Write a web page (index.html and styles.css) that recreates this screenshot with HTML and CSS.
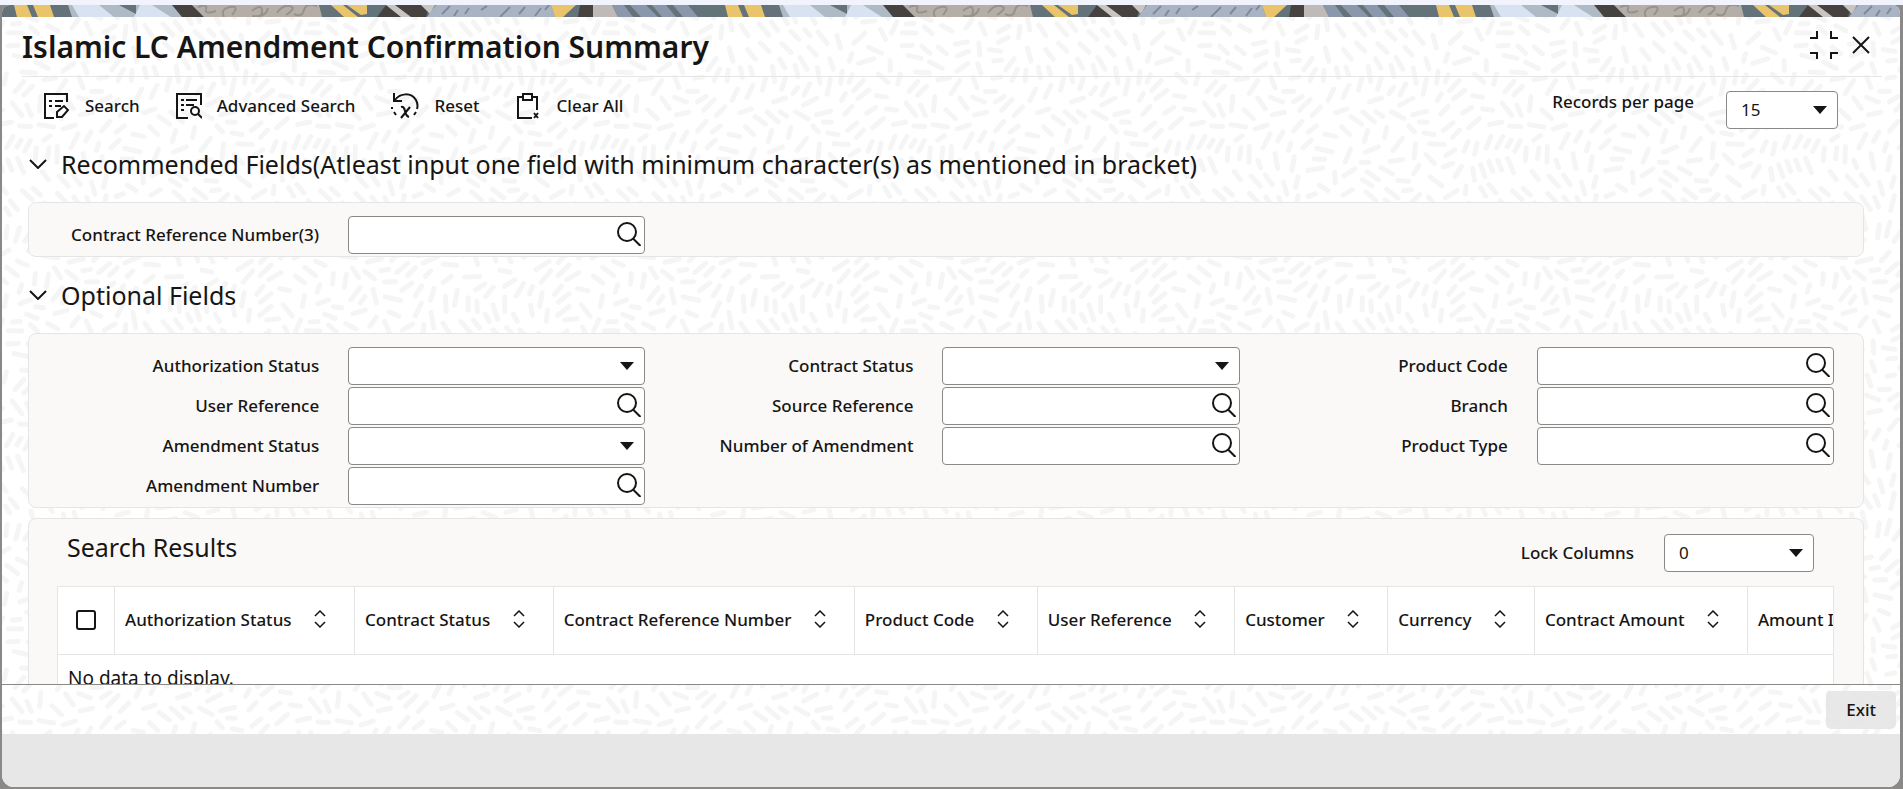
FILE: index.html
```
<!DOCTYPE html>
<html lang="en">
<head>
    <meta charset="UTF-8">
    <meta name="viewport" content="width=device-width, initial-scale=1.0">
    <title>Islamic LC Amendment Confirmation Summary</title>
    <link rel="stylesheet" href="styles.css">
</head>
<body>
    <svg class="sprite" aria-hidden="true">
        <symbol id="icon-lens" viewBox="0 0 24 24">
            <circle cx="10" cy="10" r="9" />
            <path d="M16 16.5L23.5 24" />
        </symbol>
        <symbol id="icon-chevron" viewBox="0 0 18 10">
            <path d="M1 1l8 8 8-8" />
        </symbol>
        <symbol id="icon-sort" viewBox="0 0 12 18">
            <path d="M1 6l5-5 5 5M1 12l5 5 5-5" />
        </symbol>
    </svg>

    <div class="window">
        <svg class="banner" aria-hidden="true">
            <defs>
                <pattern id="strip" width="711" height="12" patternUnits="userSpaceOnUse">
                    <rect width="711" height="12" fill="#64727a" />
                    <path d="M12 0h13l5 12H15zM31 0h17l4 12H36z" fill="#e9c46b" />
                    <path d="M66 0h107l12 12H70z" fill="#aebac6" />
                    <path d="M70 0h27l15 12H77zM138 0h12l19 12H132z" fill="#d8e2f0" />
                    <path d="M117 0h17v9z" fill="#64727a" />
                    <path d="M170 0h20l12 12h-22z" fill="#454240" />
                    <path d="M190 0h127l3 12H202z" fill="#b5aea8" />
                    <path d="M196 2q10-4 8 2t10 2M222 12q-4-8 6-10t2 8M250 6q10-8 10 0t-10 5q14 2 16-8M275 8q6-9 13-7t-4 9M292 9q8 4 10-4t13-4" fill="none" stroke="#98928c" stroke-width="2" />
                    <path d="M329 0h12l15 12h-14zM345 0h20v9l-6 1z" fill="#e9c46b" />
                    <path d="M384 0h44l-4 12h-49z" fill="#454240" />
                    <path d="M384 0h9l16 12h-10zM419 0h14l-5 9z" fill="#c9c6c2" />
                    <path d="M434 0h115l4 12H425z" fill="#a9b3c3" />
                    <path d="M440 9l8-8M452 11l4-6M463 9l4-6M485 1l-6 4M498 12l10-10M517 9l6-7M533 11l6-8M543 5l4-5" stroke="#7f8a99" stroke-width="2" />
                    <path d="M549 0h25l-13 12h-8z" fill="#e9c46b" />
                    <path d="M578 0h14v12h-16z" fill="#454240" />
                    <path d="M591 0h19l6 12h-25z" fill="#bdbab7" />
                    <path d="M610 0h12l9 12h-15zM628 0h16l12 12h-17zM650 0h14l10 12h-14zM671 0h15l10 12h-15z" fill="#8b97aa" />
                </pattern>
            </defs>
            <rect width="100%" height="12" fill="url(#strip)" />
        </svg>

        <header class="titlebar">
            <h1>Islamic LC Amendment Confirmation Summary</h1>
            <div class="window-actions">
                <button type="button" aria-label="Restore">
                    <svg width="28" height="28" viewBox="0 0 28 28"><path d="M0 7h7V0M28 7h-7V0M0 22h7v6M28 22h-7v6" /></svg>
                </button>
                <button type="button" aria-label="Close">
                    <svg width="18" height="18" viewBox="0 0 18 18"><path d="M1 1l16 16M17 1L1 17" /></svg>
                </button>
            </div>
        </header>

        <main class="content">
            <div class="toolbar">
                <button type="button">
                    <svg width="26" height="26" viewBox="0 0 26 26"><path d="M23 9V1H1v24h9" /><path d="M5 8h3M11 8h8M5 13h3M11 13h6" /><path d="M13 24v-5l7-6 4 4-6 7z" /></svg>
                    Search
                </button>
                <button type="button">
                    <svg width="26" height="26" viewBox="0 0 26 26"><path d="M25 12V1H1v24h11" /><path d="M5 7h3M10 7h11M5 12h3M10 12h8M5 17h3" /><circle cx="19" cy="18" r="4" /><path d="M22 21l4 4" /></svg>
                    Advanced Search
                </button>
                <button type="button">
                    <svg width="28" height="26" viewBox="0 0 28 26"><path d="M3 0v8h8" /><path d="M4 7C9 0 20-1 25 7c2 4 2 6 1 9" /><path d="M1 14v2M3 19l2 3M25 19l-2 3" /><path d="M10 14q3-1 4 4t4 6M19 14l-9 11" /></svg>
                    Reset
                </button>
                <button type="button">
                    <svg width="26" height="26" viewBox="0 0 26 26"><path d="M7 4H2v21h14M16 4h5v13" /><path d="M7 1h9v6H7z" /><path d="M18 20l4 5M22 20l-4 5" /></svg>
                    Clear All
                </button>
                <div class="page-size">
                    <label for="records">Records per page</label>
                    <select id="records"><option>15</option></select>
                </div>
            </div>

            <h2 class="section-title">
                <svg width="18" height="10"><use href="#icon-chevron" /></svg>
                Recommended Fields(Atleast input one field with minimum character(s) as mentioned in bracket)
            </h2>
            <section class="panel fields">
                <div class="column">
                    <div class="field">
                        <label for="contract-ref">Contract Reference Number(3)</label>
                        <div class="lookup"><input id="contract-ref" type="text"><button type="button" aria-label="Look up"><svg width="24" height="24"><use href="#icon-lens" /></svg></button></div>
                    </div>
                </div>
            </section>

            <h2 class="section-title">
                <svg width="18" height="10"><use href="#icon-chevron" /></svg>
                Optional Fields
            </h2>
            <section class="panel fields">
                <div class="column">
                    <div class="field">
                        <label for="auth-status">Authorization Status</label>
                        <select id="auth-status"><option></option></select>
                    </div>
                    <div class="field">
                        <label for="user-ref">User Reference</label>
                        <div class="lookup"><input id="user-ref" type="text"><button type="button" aria-label="Look up"><svg width="24" height="24"><use href="#icon-lens" /></svg></button></div>
                    </div>
                    <div class="field">
                        <label for="amend-status">Amendment Status</label>
                        <select id="amend-status"><option></option></select>
                    </div>
                    <div class="field">
                        <label for="amend-number">Amendment Number</label>
                        <div class="lookup"><input id="amend-number" type="text"><button type="button" aria-label="Look up"><svg width="24" height="24"><use href="#icon-lens" /></svg></button></div>
                    </div>
                </div>
                <div class="column">
                    <div class="field">
                        <label for="contract-status">Contract Status</label>
                        <select id="contract-status"><option></option></select>
                    </div>
                    <div class="field">
                        <label for="source-ref">Source Reference</label>
                        <div class="lookup"><input id="source-ref" type="text"><button type="button" aria-label="Look up"><svg width="24" height="24"><use href="#icon-lens" /></svg></button></div>
                    </div>
                    <div class="field">
                        <label for="amend-count">Number of Amendment</label>
                        <div class="lookup"><input id="amend-count" type="text"><button type="button" aria-label="Look up"><svg width="24" height="24"><use href="#icon-lens" /></svg></button></div>
                    </div>
                </div>
                <div class="column">
                    <div class="field">
                        <label for="product-code">Product Code</label>
                        <div class="lookup"><input id="product-code" type="text"><button type="button" aria-label="Look up"><svg width="24" height="24"><use href="#icon-lens" /></svg></button></div>
                    </div>
                    <div class="field">
                        <label for="branch">Branch</label>
                        <div class="lookup"><input id="branch" type="text"><button type="button" aria-label="Look up"><svg width="24" height="24"><use href="#icon-lens" /></svg></button></div>
                    </div>
                    <div class="field">
                        <label for="product-type">Product Type</label>
                        <div class="lookup"><input id="product-type" type="text"><button type="button" aria-label="Look up"><svg width="24" height="24"><use href="#icon-lens" /></svg></button></div>
                    </div>
                </div>
            </section>

            <section class="panel results">
                <div class="results-head">
                    <h2>Search Results</h2>
                    <div class="lock">
                        <label for="lock-columns">Lock Columns</label>
                        <select id="lock-columns"><option>0</option></select>
                    </div>
                </div>
                <div class="table-wrap">
                    <table>
                        <thead>
                            <tr>
                                <th class="tick"><input type="checkbox" aria-label="Select all"></th>
                                <th>Authorization Status <svg width="12" height="18"><use href="#icon-sort" /></svg></th>
                                <th>Contract Status <svg width="12" height="18"><use href="#icon-sort" /></svg></th>
                                <th>Contract Reference Number <svg width="12" height="18"><use href="#icon-sort" /></svg></th>
                                <th>Product Code <svg width="12" height="18"><use href="#icon-sort" /></svg></th>
                                <th>User Reference <svg width="12" height="18"><use href="#icon-sort" /></svg></th>
                                <th>Customer <svg width="12" height="18"><use href="#icon-sort" /></svg></th>
                                <th>Currency <svg width="12" height="18"><use href="#icon-sort" /></svg></th>
                                <th>Contract Amount <svg width="12" height="18"><use href="#icon-sort" /></svg></th>
                                <th>Amount In</th>
                            </tr>
                        </thead>
                        <tbody>
                            <tr><td colspan="10">No data to display.</td></tr>
                        </tbody>
                    </table>
                </div>
            </section>
        </main>

        <footer class="actions">
            <button type="button" class="exit">Exit</button>
        </footer>
        <div class="status"></div>
    </div>
    <script src="script.js"></script>
</body>
</html>
```
FILE: styles.css
```
* {
    margin: 0;
    padding: 0;
    box-sizing: border-box;
}

body {
    display: flex;
    height: 100vh;
    padding: 5px 3px 2px 2px;
    font-family: 'Noto Sans', 'Open Sans', sans-serif;
    font-size: 17px;
    line-height: 24px;
    color: #161513;
    background: linear-gradient(#f1f4fd 5px, #8b8987 5px);
    overflow: hidden;
}

button, input, select {
    font: inherit;
    color: inherit;
}

button {
    border: 0;
    background: none;
}

button, label {
    font-weight: 500;
}

svg {
    flex: none;
    fill: none;
    stroke: #161513;
    stroke-width: 2;
}

.sprite {
    position: absolute;
    width: 0;
    height: 0;
}

.window {
    flex: 1;
    min-width: 0;
    display: flex;
    flex-direction: column;
    border-radius: 8px 8px 12px 12px;
    background-color: #fff;
    background-image: var(--texture);
    overflow: hidden;
}

.banner {
    width: 100%;
    height: 12px;
    stroke: none;
}

.titlebar {
    display: flex;
    align-items: center;
    justify-content: space-between;
    height: 60px;
    margin: 0 18px 0 20px;
    border-bottom: 1px solid #e5e5e5;
}

h1 {
    font-size: 30px;
    line-height: 40px;
    font-weight: 600;
}

.window-actions {
    display: flex;
    align-items: center;
    gap: 14px;
    padding: 0 12px 4px 0;
}

.window-actions button {
    display: flex;
}

.content {
    flex: 1;
    min-height: 0;
    padding: 0 36px 0 26px;
    overflow: hidden;
}

.toolbar {
    display: flex;
    align-items: center;
    gap: 36px;
    height: 58px;
    padding: 0 26px 0 16px;
}

.toolbar button {
    display: flex;
    align-items: center;
    gap: 15px;
}

.page-size {
    display: flex;
    gap: 32px;
    margin-left: auto;
}

.page-size label {
    padding-top: 6px;
}

.page-size select {
    width: 112px;
    margin-top: 7px;
}

select, .lookup {
    height: 38px;
    border: 1px solid #8b8985;
    border-radius: 4px;
    background-color: #fff;
}

select {
    appearance: none;
    padding: 0 14px;
    background-image: url("data:image/svg+xml,%3Csvg xmlns='http://www.w3.org/2000/svg' width='14' height='8'%3E%3Cpath d='M0 0h14L7 8z' fill='%23161513'/%3E%3C/svg%3E");
    background-repeat: no-repeat;
    background-position: right 10px center;
}

.lookup {
    display: flex;
}

.lookup input {
    flex: 1;
    min-width: 0;
    padding: 0 12px;
    border: 0;
    background: none;
}

.lookup button {
    display: flex;
    padding: 5px 3px;
}

h2 {
    font-size: 25px;
    line-height: 34px;
    font-weight: 400;
}

.section-title {
    display: flex;
    align-items: center;
    gap: 14px;
    height: 67px;
    padding: 0 0 9px 1px;
}

.panel {
    border: 1px solid #e5e5e5;
    border-radius: 8px;
    background: #fbf9f8;
}

.fields {
    display: grid;
    grid-template-columns: repeat(3, minmax(0, 1fr));
    padding: 13px 29px 2px 22px;
}

.column {
    display: flex;
    flex-direction: column;
    gap: 2px;
}

.field {
    display: flex;
}

.field label {
    width: 50%;
    padding: 7px 29px 0 0;
    text-align: right;
}

.field select, .field .lookup {
    width: 50%;
}

.fields + .section-title {
    padding-top: 8px;
    height: 76px;
}

.results {
    margin-top: 10px;
    padding: 11px 29px 30px 28px;
}

.results-head {
    display: flex;
    justify-content: space-between;
    height: 56px;
    padding: 0 20px 0 10px;
}

.lock {
    display: flex;
    gap: 30px;
    padding-top: 4px;
}

.lock label {
    padding-top: 7px;
}

.lock select {
    width: 150px;
}

.table-wrap {
    border: 1px solid #e5e5e5;
    background: #fff;
    overflow: hidden;
}

table {
    border-collapse: collapse;
    white-space: nowrap;
}

th {
    height: 67px;
    padding: 0 28px 0 10px;
    border-right: 1px solid #e5e5e5;
    border-bottom: 1px solid #e5e5e5;
    font-weight: 500;
    text-align: left;
}

th svg {
    margin-left: 18px;
    vertical-align: -2px;
    stroke-width: 1.5;
}

.tick {
    padding: 0 18px;
}

.tick input {
    display: block;
    appearance: none;
    width: 20px;
    height: 20px;
    border: 2px solid #161513;
    border-radius: 3px;
}

td {
    padding: 11px 10px;
    font-size: 19px;
}

.actions {
    display: flex;
    justify-content: flex-end;
    align-items: flex-start;
    height: 50px;
    padding: 6px 4px;
    border-top: 1px solid #8b8985;
}

.exit {
    height: 38px;
    padding: 0 20px;
    border-radius: 5px;
    background: #e6e5e4dd;
}

.status {
    height: 53px;
    background: #e7e7e7;
}
```
FILE: script.js
```
// Builds the tiling dash texture used behind the window
const size = 298;
const dashes = [];
let seed = 7;

function random() {
    seed = (seed * 16807) % 2147483647;
    return seed / 2147483647;
}

function wrapGap(a, b) {
    const d = Math.abs(a - b) % size;
    return Math.min(d, size - d);
}

function isFree(points) {
    return dashes.every(dash => dash.every(p =>
        points.every(q => Math.hypot(wrapGap(p[0], q[0]), wrapGap(p[1], q[1])) > 8.5)
    ));
}

const k = 2 * Math.PI / size;
for (let i = 0; i < 20000; i++) {
    const x = random() * size;
    const y = random() * size;
    const angle = 1.6 * Math.sin(k * (x + y)) + 1.6 * Math.cos(k * (y - x)) + 0.8 * Math.sin(k * 2 * x);
    const length = i < 6000 ? 5 + random() * 3 : 4;
    const points = [-1, 0, 1].map(t => [x + t * length * Math.cos(angle), y + t * length * Math.sin(angle)]);
    if (isFree(points)) {
        dashes.push(points);
    }
}

let path = '';
dashes.forEach(dash => {
    [-size, 0, size].forEach(dx => [-size, 0, size].forEach(dy => {
        path += `M${(dash[0][0] + dx).toFixed(1)} ${(dash[0][1] + dy).toFixed(1)}L${(dash[2][0] + dx).toFixed(1)} ${(dash[2][1] + dy).toFixed(1)}`;
    }));
});

const svg = `<svg xmlns="http://www.w3.org/2000/svg" width="${size}" height="${size}"><path d="${path}" stroke="#f5f5f5" stroke-width="5" stroke-linecap="round"/></svg>`;
document.documentElement.style.setProperty('--texture', `url("data:image/svg+xml,${encodeURIComponent(svg)}")`);
```
